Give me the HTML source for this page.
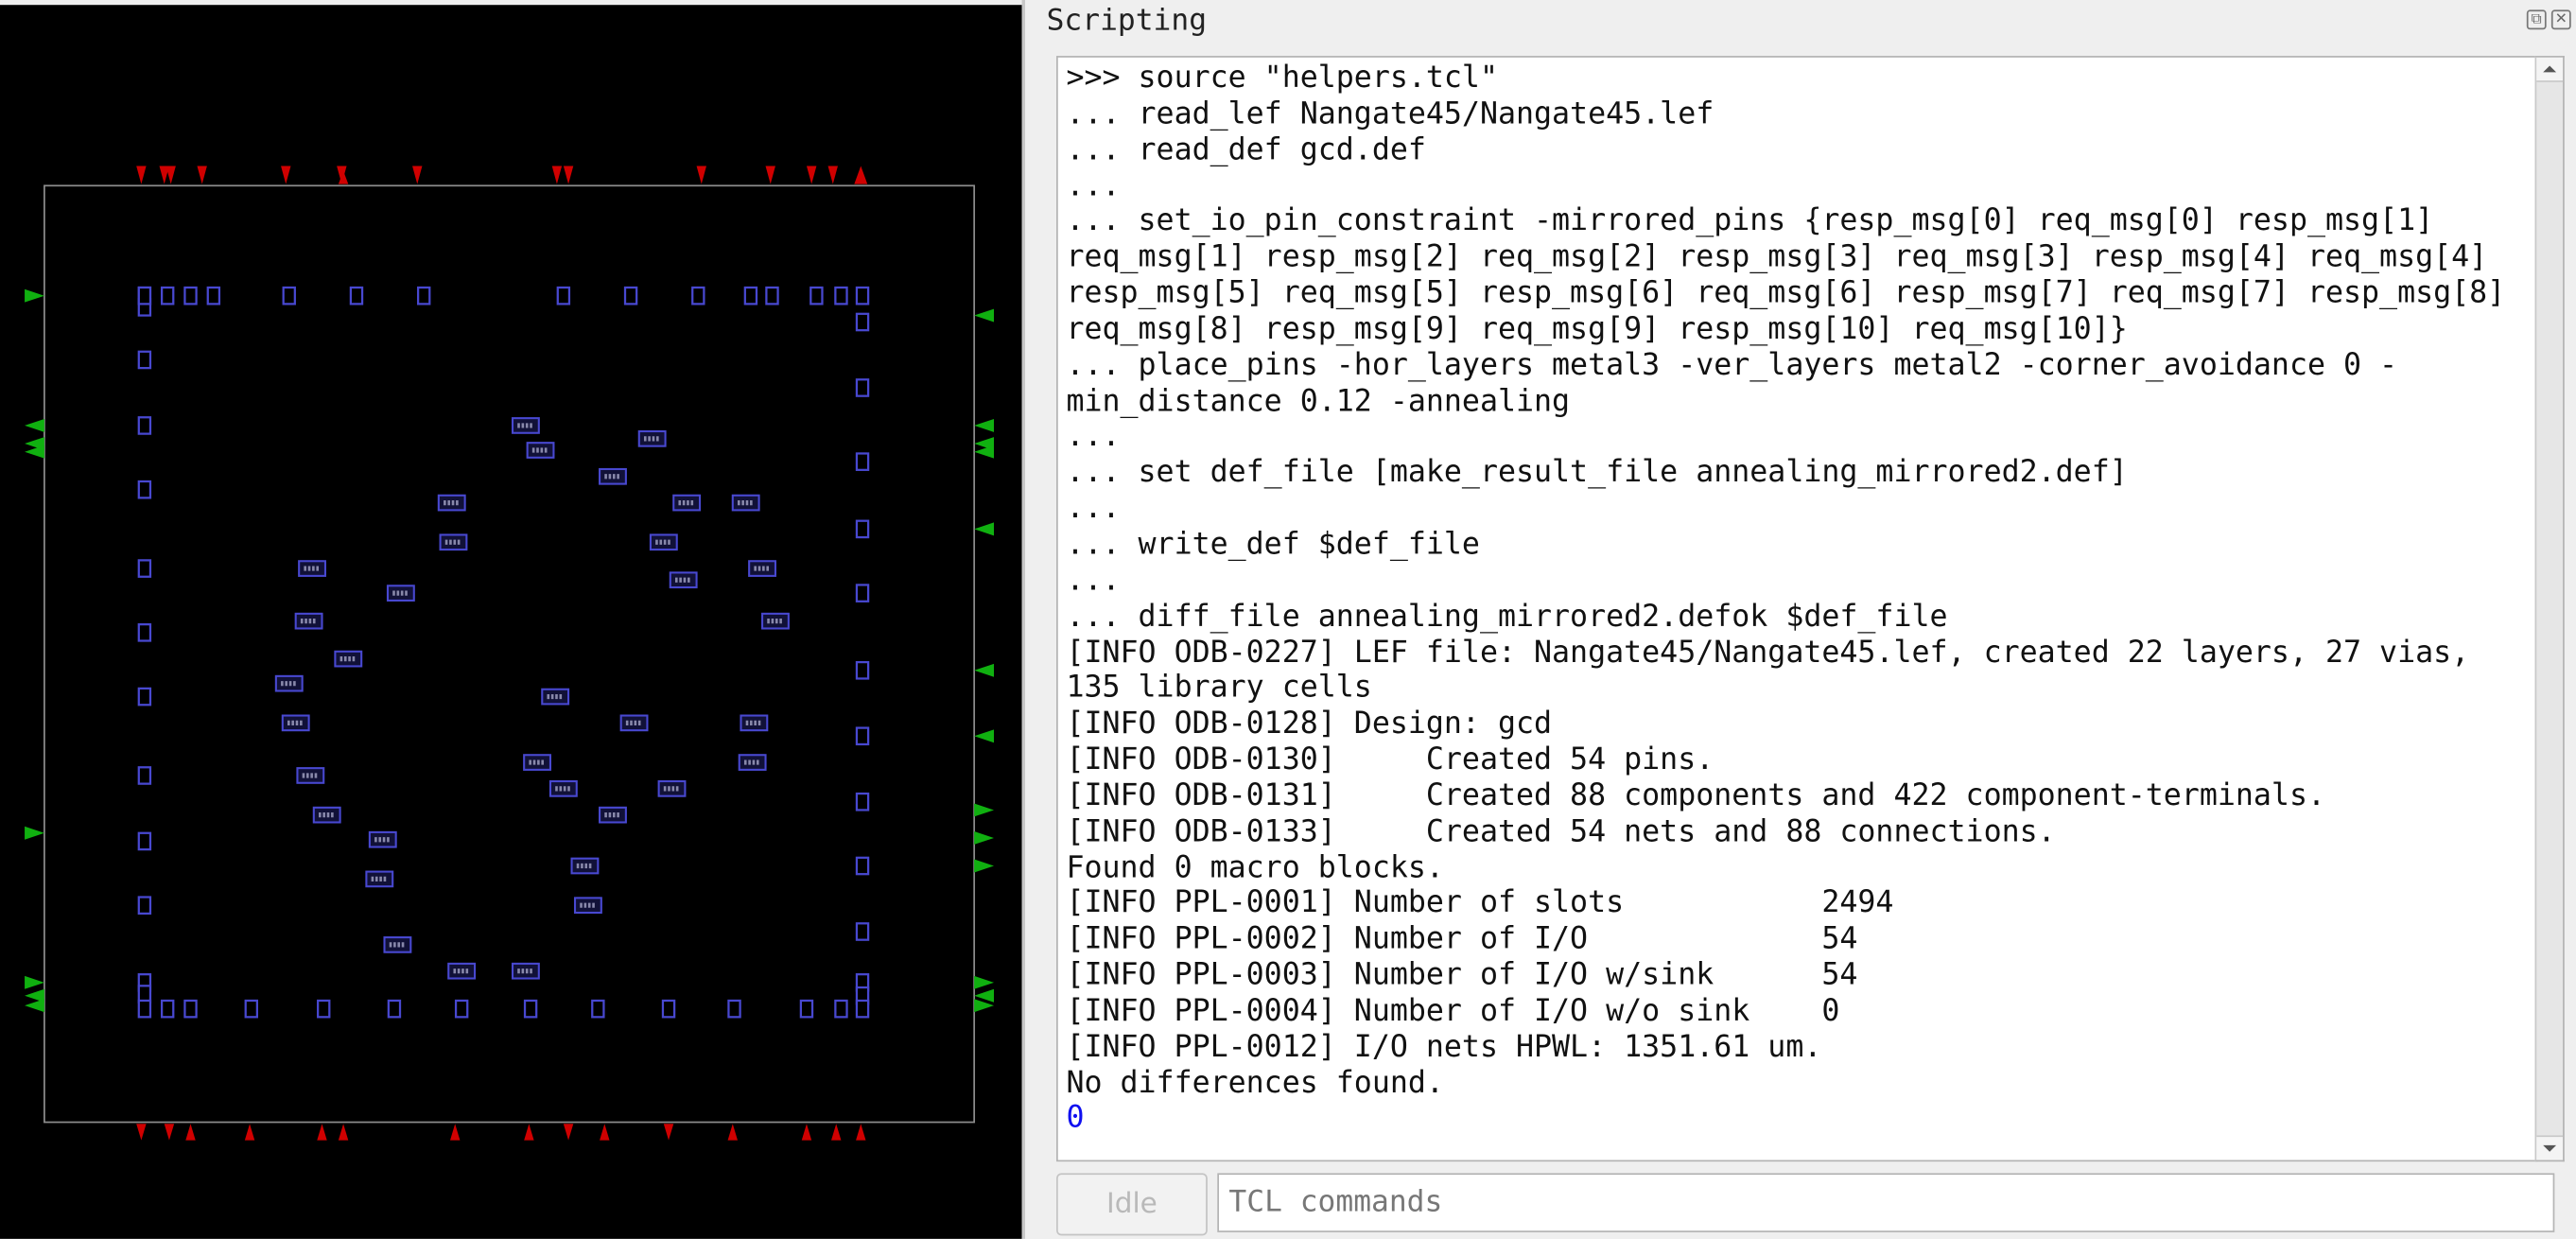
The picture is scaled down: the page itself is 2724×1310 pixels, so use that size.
<!DOCTYPE html>
<html><head><meta charset="utf-8">
<style>
html,body{margin:0;padding:0;width:2724px;height:1310px;overflow:hidden;background:#efefef;}
#root{position:absolute;left:0;top:0;width:1568px;height:754px;transform:scale(1.7372);transform-origin:0 0;background:#efefef;font-family:"DejaVu Sans Mono","Liberation Mono",monospace;}
#lay{position:absolute;left:0;top:3px;width:622px;height:751px;background:#000;}
#sep{position:absolute;left:622px;top:0;width:2px;height:754px;background:#c8c8c8;}
#title{position:absolute;left:637px;top:2px;font-size:18px;color:#222;}
#ta{position:absolute;left:643px;top:34px;width:900px;height:671px;background:#fff;border:1px solid #b4b4b4;overflow:hidden;}
#txt{position:absolute;left:5px;top:2px;font-size:18.2px;color:#111;white-space:pre;}
#txt div{height:21.85px;line-height:21.85px;}
#sb{position:absolute;left:1543px;top:34px;width:16px;height:671px;border:1px solid #b4b4b4;border-left:1px solid #c8c8c8;background:#e6e6e6;}
#btn{position:absolute;left:643px;top:714px;width:90px;height:36px;border:1px solid #c4c4c4;border-radius:3px;background:#f2f2f2;color:#b9b9b9;font-family:"DejaVu Sans",sans-serif;font-size:17px;text-align:center;line-height:36px;}
#inp{position:absolute;left:741px;top:714px;width:814px;height:36px;border:1px solid #b4b4b4;background:#fff;color:#777;font-size:18px;line-height:34px;padding-left:6px;box-sizing:border-box;}
.ic{position:absolute;top:6px;width:10px;height:10px;border:1px solid #777;border-radius:2px;font-size:9px;line-height:10px;text-align:center;color:#666;font-family:"DejaVu Sans",sans-serif;}
</style></head><body><div id="root">
<div id="lay">
<svg id="s2" width="622" height="754" viewBox="0 0 622 754" style="position:absolute;left:0;top:-3px">
</svg>
</div>
<div id="sep"></div>
<div id="title">Scripting</div>
<div class="ic" style="left:1538px">⧉</div>
<div class="ic" style="left:1553px">✕</div>
<div id="ta"><div id="txt"><div>&gt;&gt;&gt; source "helpers.tcl"</div><div>... read_lef Nangate45/Nangate45.lef</div><div>... read_def gcd.def</div><div>...</div><div>... set_io_pin_constraint -mirrored_pins {resp_msg[0] req_msg[0] resp_msg[1]</div><div>req_msg[1] resp_msg[2] req_msg[2] resp_msg[3] req_msg[3] resp_msg[4] req_msg[4]</div><div>resp_msg[5] req_msg[5] resp_msg[6] req_msg[6] resp_msg[7] req_msg[7] resp_msg[8]</div><div>req_msg[8] resp_msg[9] req_msg[9] resp_msg[10] req_msg[10]}</div><div>... place_pins -hor_layers metal3 -ver_layers metal2 -corner_avoidance 0 -</div><div>min_distance 0.12 -annealing</div><div>...</div><div>... set def_file [make_result_file annealing_mirrored2.def]</div><div>...</div><div>... write_def $def_file</div><div>...</div><div>... diff_file annealing_mirrored2.defok $def_file</div><div>[INFO ODB-0227] LEF file: Nangate45/Nangate45.lef, created 22 layers, 27 vias,</div><div>135 library cells</div><div>[INFO ODB-0128] Design: gcd</div><div>[INFO ODB-0130]     Created 54 pins.</div><div>[INFO ODB-0131]     Created 88 components and 422 component-terminals.</div><div>[INFO ODB-0133]     Created 54 nets and 88 connections.</div><div>Found 0 macro blocks.</div><div>[INFO PPL-0001] Number of slots           2494</div><div>[INFO PPL-0002] Number of I/O             54</div><div>[INFO PPL-0003] Number of I/O w/sink      54</div><div>[INFO PPL-0004] Number of I/O w/o sink    0</div><div>[INFO PPL-0012] I/O nets HPWL: 1351.61 um.</div><div>No differences found.</div><div style="color:#1010f0">0</div></div></div>
<div id="sb">
<div style="position:absolute;left:0;top:0;width:16px;height:14px;background:#f4f4f4;border-bottom:1px solid #c8c8c8"></div>
<div style="position:absolute;left:4px;top:5px;width:0;height:0;border-left:4px solid transparent;border-right:4px solid transparent;border-bottom:4px solid #555"></div>
<div style="position:absolute;left:0;bottom:0;width:16px;height:14px;background:#f4f4f4;border-top:1px solid #c8c8c8"></div>
<div style="position:absolute;left:4px;bottom:5px;width:0;height:0;border-left:4px solid transparent;border-right:4px solid transparent;border-top:4px solid #555"></div>
</div>
<div id="btn">Idle</div>
<div id="inp">TCL commands</div>
</div>
<script>
(function(){
var ns="http://www.w3.org/2000/svg",s=document.getElementById("s2");
function el(t,a){var e=document.createElementNS(ns,t);for(var k in a)e.setAttribute(k,a[k]);s.appendChild(e);}
el("rect",{x:27,y:113,width:566,height:570,fill:"none",stroke:"#8c8c8c","stroke-width":1});
function sc(x,y){el("rect",{x:x-3.5,y:y-5,width:7,height:10,fill:"#000",stroke:"#4848d0","stroke-width":1.3});}
function wc(x,y){el("rect",{x:x-8,y:y-4.5,width:16,height:9,fill:"#111138",stroke:"#4848d0","stroke-width":1.2});
 el("line",{x1:x-5,y1:y,x2:x+5,y2:y,stroke:"#8888aa","stroke-width":3,"stroke-dasharray":"1.5 1"});}
[[88,180],[88,187],[88,219],[88,259],[88,298],[88,346],[88,385],[88,424],[88,472],[88,512],[88,551],[88,598],[88,605]].forEach(function(p){sc(p[0],p[1]);});
[88,102,116,130,176,217,258,343,384,425,457,470,497,512,525].forEach(function(x){sc(x,180);});
[196,236,281,322,361,408,448,488,527,567,598,606].forEach(function(y){sc(525,y);});
[88,102,116,153,197,240,281,323,364,407,447,491,512,525].forEach(function(x){sc(x,614);});
[[320,259],[329,274],[397,267],[373,290],[275,306],[418,306],[454,306],[276,330],[404,330],[190,346],[464,346],[244,361],[416,353],[188,378],[472,378],[212,401],[176,416],[338,424],[180,440],[386,440],[459,440],[327,464],[458,464],[189,472],[343,480],[409,480],[199,496],[373,496],[233,511],[356,527],[231,535],[358,551],[242,575],[281,591],[320,591]].forEach(function(p){wc(p[0],p[1]);});
var R="#d00000",G="#10b010";
[86,100,104,123,174,208,254,339,346,427,469,494,507].forEach(function(x){el("polygon",{points:(x-3)+",101 "+(x+3)+",101 "+x+",112",fill:R});});
el("polygon",{points:"520,112 528,112 524,101",fill:R});
el("polygon",{points:"206,112 212,112 209,104",fill:R});
[86,103].forEach(function(x){el("polygon",{points:(x-3)+",684 "+(x+3)+",684 "+x+",694",fill:R});});
[116,152,196,209,277,322,368,446,491,509,524].forEach(function(x){el("polygon",{points:(x-3)+",694 "+(x+3)+",694 "+x+",684",fill:R});});
[346,407].forEach(function(x){el("polygon",{points:(x-3)+",684 "+(x+3)+",684 "+x+",694",fill:R});});
function gr(x,y){el("polygon",{points:x+","+(y-4)+" "+x+","+(y+4)+" "+(x+12)+","+y,fill:G});}
function gl(x,y){el("polygon",{points:(x+12)+","+(y-4)+" "+(x+12)+","+(y+4)+" "+x+","+y,fill:G});}
gr(15,180);gl(15,259);gl(15,270);gl(15,275);gr(15,507);gr(15,598);gl(15,606);gl(15,612);
gl(593,192);gl(593,259);gl(593,270);gl(593,275);gl(593,322);gl(593,408);gl(593,448);gr(593,493);gr(593,510);gr(593,527);gr(593,598);gl(593,606);gr(593,612);
})();
</script>
</body></html>
